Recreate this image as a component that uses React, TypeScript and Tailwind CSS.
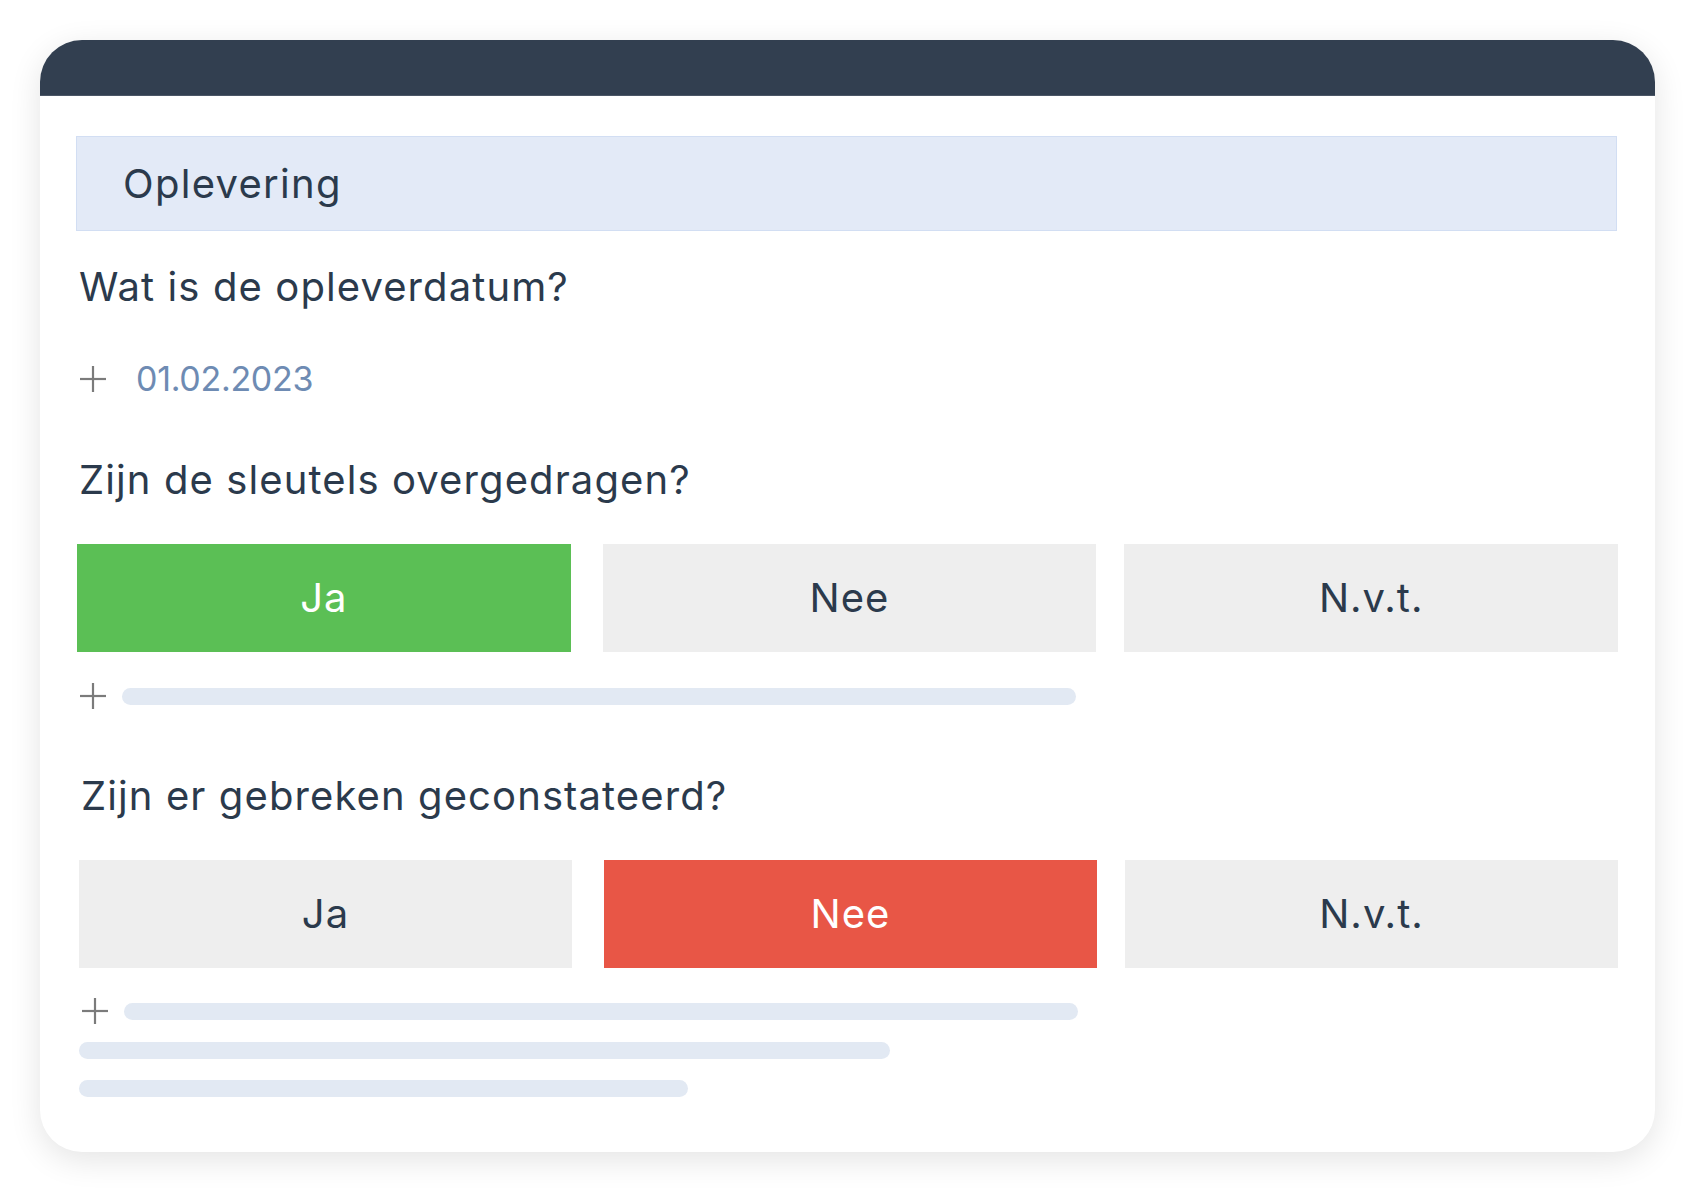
import React from 'react';

type Choice = 'Ja' | 'Nee' | 'N.v.t.';

const options: Choice[] = ['Ja', 'Nee', 'N.v.t.'];

const selectedStyle: Record<Choice, string> = {
    'Ja': 'bg-[#5bbf55] text-white',
    'Nee': 'bg-[#e85646] text-white',
    'N.v.t.': 'bg-[#5bbf55] text-white',
};

// the gap after the first option is a bit wider than after the second one
const optionGap: Record<Choice, string> = {
    'Ja': '',
    'Nee': 'ml-[32px]',
    'N.v.t.': 'ml-[28px]',
};

const PlusIcon: React.FC = () => (
    <svg width="28" height="28" viewBox="0 0 28 28" className="shrink-0">
        <line x1="14" y1="1" x2="14" y2="27" stroke="#7b7b7b" strokeWidth="2.2" />
        <line x1="1" y1="14" x2="27" y2="14" stroke="#7b7b7b" strokeWidth="2.2" />
    </svg>
);

const Bar: React.FC<{ width: string }> = ({ width }) => (
    <div className={`${width} h-[17px] rounded-full bg-[#e2e9f3]`} />
);

const ChoiceRow: React.FC<{ value: Choice }> = ({ value }) => (
    <div className="flex">
        {options.map((opt) => (
            <div
                key={opt}
                className={
                    'w-[494px] h-[108px] flex items-center justify-center text-[40px] leading-[48px] tracking-[1px] ' +
                    optionGap[opt] + ' ' +
                    (opt === value ? selectedStyle[opt] : 'bg-[#eeeeee] text-[#2b3a4c]')
                }
            >
                {opt}
            </div>
        ))}
    </div>
);

const Question: React.FC<{ children: React.ReactNode; className?: string }> = ({ children, className }) => (
    <h2 className={'pl-[2px] text-[40px] leading-[48px] tracking-[1.1px] text-[#2b3a4c] font-normal ' + (className ?? '')}>
        {children}
    </h2>
);

export default function App() {
    return (
        <div className="w-[1704px] h-[1201px] bg-white pt-[40px] pl-[40px] font-['Inter',sans-serif]">
            <div className="w-[1615px] h-[1112px] rounded-[42px] bg-white overflow-hidden shadow-[0_8px_32px_rgba(0,0,0,0.11)]">
                <div className="h-[56px] bg-[#323f50] border-b border-[#4b5666]" />

                <div className="pl-[37px] pr-[37px]">
                    <div className="mt-[40px] ml-[-1px] mr-[1px] h-[95px] flex items-center pl-[46px] bg-[#e3eaf7] border border-[#d2def3]">
                        <span className="text-[40px] leading-[48px] tracking-[1.3px] text-[#2b3a4c]">Oplevering</span>
                    </div>

                    <Question className="mt-[32px]">Wat is de opleverdatum?</Question>

                    <div className="mt-[48px] flex items-center pl-[2px] gap-[29px]">
                        <PlusIcon />
                        <span className="text-[34px] leading-[40px] tracking-[-0.3px] text-[#6e8bb3]">01.02.2023</span>
                    </div>

                    <Question className="mt-[57px]">Zijn de sleutels overgedragen?</Question>

                    <div className="mt-[40px]">
                        <ChoiceRow value="Ja" />
                    </div>

                    <div className="mt-[30px] flex items-center pl-[2px] gap-[15px]">
                        <PlusIcon />
                        <Bar width="w-[954px]" />
                    </div>

                    <div className="ml-[2px]">
                        <Question className="mt-[62px]">Zijn er gebreken geconstateerd?</Question>

                        <div className="mt-[40px]">
                            <ChoiceRow value="Nee" />
                        </div>

                        <div className="mt-[29px] flex items-center pl-[2px] gap-[15px]">
                            <PlusIcon />
                            <Bar width="w-[954px]" />
                        </div>

                        <div className="mt-[17px] flex flex-col gap-[21px]">
                            <Bar width="w-[811px]" />
                            <Bar width="w-[609px]" />
                        </div>
                    </div>
                </div>
            </div>
        </div>
    );
}
